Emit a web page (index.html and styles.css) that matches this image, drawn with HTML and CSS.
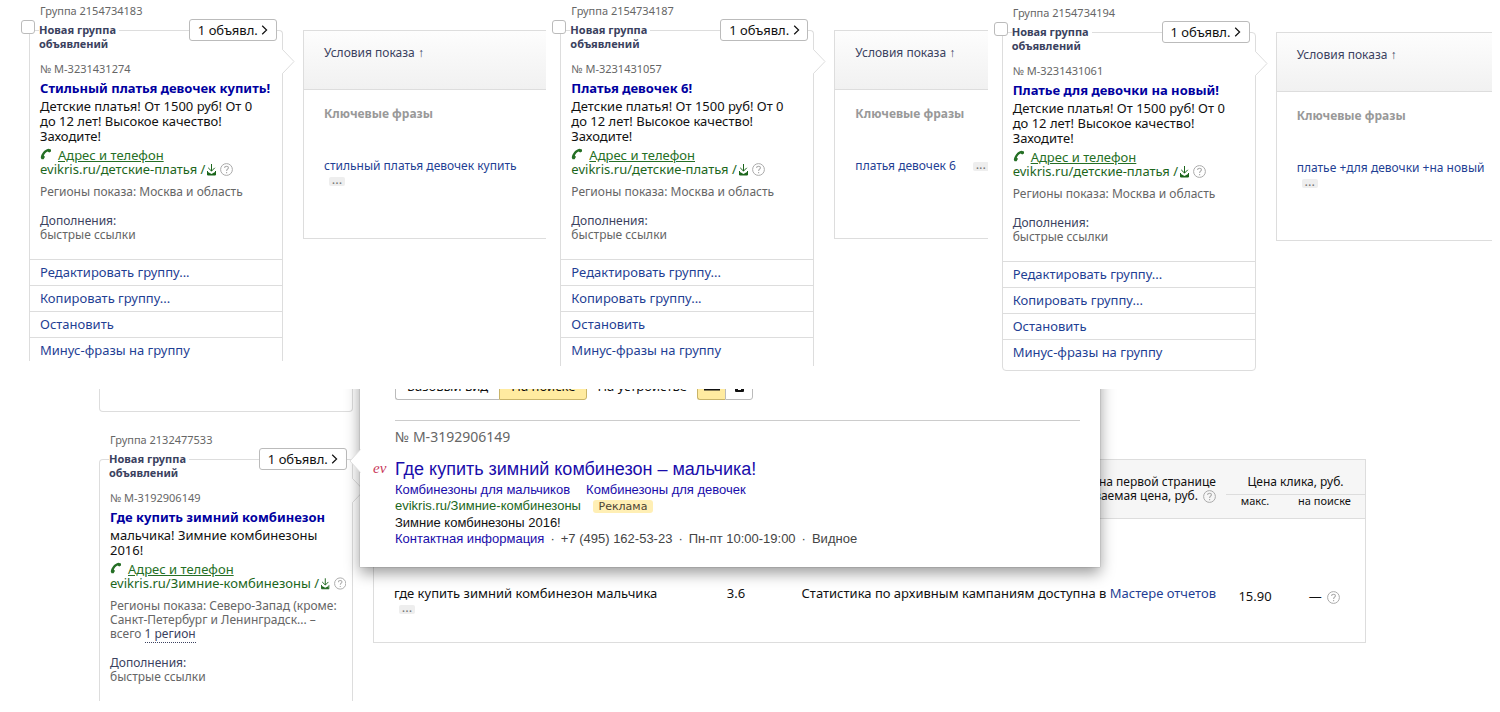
FILE: index.html
```
<!DOCTYPE html>
<html lang="ru">
<head>
<meta charset="utf-8">
<title>Группы объявлений</title>
<link rel="stylesheet" href="styles.css">
</head>
<body>
<svg class="sprite" width="0" height="0" aria-hidden="true">
  <symbol id="phone" viewBox="0 0 12 12"><path d="M0.8 9.8C1 6 4.6 1.400 8.400 0.800L11 1.400V3.500L9.200 4.600L7.600 3.400C5.800 4.200 4.400 6 3.800 7.800L5 8.800L3.600 11.200L1.600 11.200Z"/></symbol>
  <symbol id="download" viewBox="0 0 9 12"><path d="M4.5 0V7M1.200 3.800L4.500 7.100L7.800 3.800" fill="none" stroke="currentColor"/><path d="M0.500 7V11H8.500V7" fill="none" stroke="currentColor"/><path d="M1 8L4.500 10L8 8V11H1Z"/></symbol>
  <symbol id="help" viewBox="0 0 13 13"><circle cx="6.5" cy="6.5" r="5.9" fill="none" stroke="currentColor"/><path d="M4.6 5.1C4.6 2.6 8.5 2.7 8.4 4.9C8.3 6.2 6.6 6.3 6.6 7.9M6.6 9V10.2" fill="none" stroke="currentColor" stroke-width="1.1"/></symbol>
  <symbol id="chevron" viewBox="0 0 7 10"><path d="M1.2 0.7L5.6 5L1.2 9.3" fill="none" stroke="currentColor" stroke-width="1.2"/></symbol>
  <symbol id="pointer" viewBox="0 0 13 25"><path d="M0 0L12 12.5L0 25Z" fill="#fff"/><path d="M0.5 0V0.5L12 12.5L0.5 24.5V25" fill="none" stroke="#ddd"/></symbol>
</svg>

<main>
  <div class="groups">
    <section class="group">
      <div class="side">
        <p class="group-id">Группа 2154734183</p>
        <div class="card">
          <input class="check" type="checkbox" aria-label="Выбрать группу 2154734183">
          <svg class="pointer"><use href="#pointer"/></svg>
          <div class="head"><h2>Новая группа объявлений</h2><button type="button" class="count">1 объявл. <svg class="chevron"><use href="#chevron"/></svg></button></div>
          <div class="ad">
            <p class="num">№ М-3231431274</p>
            <h3>Стильный платья девочек купить!</h3>
            <p class="desc">Детские платья! От 1500 руб! От 0 до 12 лет! Высокое качество! Заходите!</p>
            <p class="contact"><svg class="phone"><use href="#phone"/></svg><a href="#">Адрес и телефон</a></p>
            <p class="url">evikris.ru/детские-платья /<svg class="download"><use href="#download"/></svg><svg class="help"><use href="#help"/></svg></p>
            <p class="regions">Регионы показа: Москва и область</p>
            <p class="extra"><b>Дополнения:</b><br>быстрые ссылки</p>
          </div>
          <nav class="actions"><a href="#">Редактировать группу...</a><a href="#">Копировать группу...</a><a href="#">Остановить</a><a href="#">Минус-фразы на группу</a></nav>
        </div>
      </div>
      <table class="terms">
        <thead><tr><th>Условия показа <span class="sort">↑</span></th></tr></thead>
        <tbody><tr><td><h4>Ключевые фразы</h4><a href="#">стильный платья девочек купить</a><br><button type="button" class="more" aria-label="Ещё">...</button></td></tr></tbody>
      </table>
    </section>

    <section class="group">
      <div class="side">
        <p class="group-id">Группа 2154734187</p>
        <div class="card mid">
          <input class="check" type="checkbox" aria-label="Выбрать группу 2154734187">
          <svg class="pointer"><use href="#pointer"/></svg>
          <div class="head"><h2>Новая группа объявлений</h2><button type="button" class="count">1 объявл. <svg class="chevron"><use href="#chevron"/></svg></button></div>
          <div class="ad">
            <p class="num">№ М-3231431057</p>
            <h3>Платья девочек 6!</h3>
            <p class="desc">Детские платья! От 1500 руб! От 0 до 12 лет! Высокое качество! Заходите!</p>
            <p class="contact"><svg class="phone"><use href="#phone"/></svg><a href="#">Адрес и телефон</a></p>
            <p class="url">evikris.ru/детские-платья /<svg class="download"><use href="#download"/></svg><svg class="help"><use href="#help"/></svg></p>
            <p class="regions">Регионы показа: Москва и область</p>
            <p class="extra"><b>Дополнения:</b><br>быстрые ссылки</p>
          </div>
          <nav class="actions"><a href="#">Редактировать группу...</a><a href="#">Копировать группу...</a><a href="#">Остановить</a><a href="#">Минус-фразы на группу</a></nav>
        </div>
      </div>
      <table class="terms">
        <thead><tr><th>Условия показа <span class="sort">↑</span></th></tr></thead>
        <tbody><tr><td class="tight"><h4>Ключевые фразы</h4><a href="#">платья девочек 6</a><button type="button" class="more" aria-label="Ещё">...</button></td></tr></tbody>
      </table>
    </section>

    <section class="group lower">
      <div class="side">
        <p class="group-id">Группа 2154734194</p>
        <div class="card whole">
          <input class="check" type="checkbox" aria-label="Выбрать группу 2154734194">
          <svg class="pointer"><use href="#pointer"/></svg>
          <div class="head"><h2>Новая группа объявлений</h2><button type="button" class="count">1 объявл. <svg class="chevron"><use href="#chevron"/></svg></button></div>
          <div class="ad">
            <p class="num">№ М-3231431061</p>
            <h3>Платье для девочки на новый!</h3>
            <p class="desc">Детские платья! От 1500 руб! От 0 до 12 лет! Высокое качество! Заходите!</p>
            <p class="contact"><svg class="phone"><use href="#phone"/></svg><a href="#">Адрес и телефон</a></p>
            <p class="url">evikris.ru/детские-платья /<svg class="download"><use href="#download"/></svg><svg class="help"><use href="#help"/></svg></p>
            <p class="regions">Регионы показа: Москва и область</p>
            <p class="extra"><b>Дополнения:</b><br>быстрые ссылки</p>
          </div>
          <nav class="actions"><a href="#">Редактировать группу...</a><a href="#">Копировать группу...</a><a href="#">Остановить</a><a href="#">Минус-фразы на группу</a></nav>
        </div>
      </div>
      <table class="terms">
        <thead><tr><th>Условия показа <span class="sort">↑</span></th></tr></thead>
        <tbody><tr><td><h4>Ключевые фразы</h4><a href="#">платье +для девочки +на новый</a><br><button type="button" class="more" aria-label="Ещё">...</button></td></tr></tbody>
      </table>
    </section>
  </div>

  <div class="detail">
    <div class="previous"></div>
    <section class="group">
      <div class="side">
        <p class="group-id">Группа 2132477533</p>
        <div class="card">
          <svg class="pointer"><use href="#pointer"/></svg>
          <div class="head"><h2>Новая группа объявлений</h2><button type="button" class="count">1 объявл. <svg class="chevron"><use href="#chevron"/></svg></button></div>
          <div class="ad">
            <p class="num">№ М-3192906149</p>
            <h3>Где купить зимний комбинезон</h3>
            <p class="desc">мальчика! Зимние комбинезоны 2016!</p>
            <p class="contact"><svg class="phone"><use href="#phone"/></svg><a href="#">Адрес и телефон</a></p>
            <p class="url">evikris.ru/Зимние-комбинезоны /<svg class="download"><use href="#download"/></svg><svg class="help"><use href="#help"/></svg></p>
            <p class="regions">Регионы показа: Северо-Запад (кроме: Санкт-Петербург и Ленинградск... – всего <a href="#">1 регион</a></p>
            <p class="extra"><b>Дополнения:</b><br>быстрые ссылки</p>
          </div>
        </div>
      </div>
      <table class="stats">
        <colgroup><col class="c-phrase"><col class="c-ctr"><col><col class="c-max"><col class="c-search"></colgroup>
        <thead>
          <tr><th rowspan="2"></th><th rowspan="2"></th><th rowspan="2" class="right">Ставка на первой странице<br>Списываемая цена, руб. <svg class="help"><use href="#help"/></svg></th><th colspan="2" class="price">Цена клика, руб.</th></tr>
          <tr><th class="sub">макс.</th><th class="sub">на поиске</th></tr>
        </thead>
        <tbody>
          <tr><td class="phrase">где купить зимний комбинезон мальчика<br><button type="button" class="more" aria-label="Ещё">...</button></td><td>3.6</td><td class="right">Статистика по архивным кампаниям доступна в <a href="#">Мастере отчетов</a></td><td class="money">15.90</td><td class="money">— <svg class="help"><use href="#help"/></svg></td></tr>
        </tbody>
      </table>
    </section>

    <aside class="preview">
      <svg class="notch" viewBox="0 0 12 24"><path d="M12 0L1 12L12 24Z" fill="#fff"/><path d="M11.5 0.5L1 12L11.5 23.5" fill="none" stroke="#ddd"/></svg>
      <div class="tabs">
        <div class="switch"><button type="button">Базовый вид</button><button type="button" class="on">На поиске</button></div>
        <span>На устройстве</span>
        <div class="switch devices">
          <button type="button" class="on" aria-label="Компьютер"><svg width="16" height="12" viewBox="0 0 16 12"><path d="M2 0H14V8H2ZM0 9H16V11.500H0Z"/></svg></button>
          <button type="button" aria-label="Телефон"><svg width="9" height="14" viewBox="0 0 9 14"><path d="M1 0H8Q9 0 9 1V13Q9 14 8 14H1Q0 14 0 13V1Q0 0 1 0Z"/><path d="M3 11.500H6" stroke="#fff"/></svg></button>
        </div>
      </div>
      <p class="preview-num">№ М-3192906149</p>
      <div class="snippet">
        <span class="favicon">ev</span>
        <h3><a href="#">Где купить зимний комбинезон – мальчика!</a></h3>
        <p class="sitelinks"><a href="#">Комбинезоны для мальчиков</a><a href="#">Комбинезоны для девочек</a></p>
        <p class="address">evikris.ru/Зимние-комбинезоны <span class="badge">Реклама</span></p>
        <p class="body">Зимние комбинезоны 2016!</p>
        <p class="info"><a href="#">Контактная информация</a><i>·</i>+7 (495) 162-53-23<i>·</i>Пн-пт 10:00-19:00<i>·</i>Видное</p>
      </div>
    </aside>
  </div>
</main>
</body>
</html>
```
FILE: styles.css
```
* { box-sizing: border-box; }

body {
  margin: 0;
  background: #fff;
  color: #111;
  font: 13px/15px "Noto Sans", sans-serif;
}

h2, h3, h4, p { margin: 0; }
a { color: #1f3f94; text-decoration: none; }
svg { fill: currentColor; }
.sprite { position: absolute; }

button {
  font: inherit;
  color: inherit;
  background: #fff;
  border: 0;
  padding: 0;
  cursor: pointer;
}

.groups {
  display: grid;
  grid-template-columns: minmax(0, 517fr) minmax(0, 427fr) minmax(0, 490fr);
  gap: 14px;
  align-items: start;
  padding: 3px 8px 0 29px;
  height: 389px;
}

.group { display: flex; align-items: flex-start; gap: 20px; }
.lower { padding-top: 2px; }
.side { flex: none; width: 254px; }

.group-id {
  padding-left: 11px;
  font-size: 11px;
  line-height: 16px;
  color: #666;
}

.card {
  position: relative;
  margin-top: 11px;
  border: 1px solid #ddd;
  border-bottom: 0;
  border-radius: 4px 4px 0 0;
}

.mid { padding-bottom: 5px; }
.whole { padding-bottom: 7px; border-bottom: 1px solid #ddd; border-radius: 4px; }

.check {
  position: absolute;
  left: -9px;
  top: -11px;
  width: 14px;
  height: 14px;
  margin: 0;
  appearance: none;
  background: #fff;
  border: 1px solid #bbb;
  border-radius: 3px;
}

.pointer {
  position: absolute;
  right: -13px;
  top: 18px;
  width: 13px;
  height: 25px;
}

.head {
  display: flex;
  justify-content: space-between;
  align-items: flex-start;
  margin-top: -12px;
  padding: 0 5px 0 9px;
}

.head h2 {
  width: min-content;
  min-width: 80px;
  margin-top: 4px;
  background: #fff;
  font-size: 11px;
  line-height: 14px;
  color: #3b4260;
}

.count {
  width: 88px;
  height: 22px;
  border: 1px solid #bbb;
  border-radius: 3px;
}

.chevron { width: 7px; height: 10px; }

.ad { padding: 9px 6px 17px 10px; }
.num { font-size: 11px; line-height: 18px; color: #666; }

.ad h3 {
  font-size: 13px;
  line-height: 21px;
  color: #0000a0;
  white-space: nowrap;
}

.desc { padding-right: 20px; }
.contact { display: flex; gap: 6px; margin-top: 4px; line-height: 14px; }
.contact a { color: #256f25; text-decoration: underline; }
.phone { width: 12px; height: 12px; color: #256f25; }
.url { display: flex; align-items: center; color: #1c661c; white-space: nowrap; }
.download { width: 9px; height: 12px; margin-left: 2px; }
.help { width: 13px; height: 13px; margin-left: 4px; color: #aaa; }

.regions, .extra { font-size: 12px; line-height: 14px; color: #666; }
.regions { margin-top: 8px; }
.regions a { color: #3b4260; border-bottom: 1px dotted #3b4260; }
.extra { margin-top: 15px; }
.extra b { font-weight: normal; color: #3b4260; }

.actions a {
  display: block;
  height: 26px;
  padding-left: 10px;
  border-top: 1px solid #ddd;
  line-height: 25px;
}

.actions a:last-child { height: 24px; }

.terms {
  flex: 1;
  min-width: 0;
  height: 209px;
  margin-top: 27px;
  border-collapse: separate;
  border-spacing: 0;
  border: 1px solid #ddd;
  border-right: 0;
}

.terms th {
  height: 59px;
  padding: 14px 20px 0;
  border-bottom: 1px solid #ddd;
  background: linear-gradient(#fdfdfd, #f1f1f1);
  font-size: 12px;
  font-weight: normal;
  text-align: left;
  vertical-align: top;
  color: #3b4260;
}

.sort { font-size: 12px; }

.terms td {
  max-width: 0;
  padding: 16px 0 0 20px;
  vertical-align: top;
  white-space: nowrap;
}

.terms td.tight { overflow: hidden; }
.terms h4 { margin-bottom: 37px; font-size: 12px; color: #999; }
.terms td a { font-size: 12px; }

.more {
  width: 16px;
  height: 9px;
  margin: 4px 0 0 5px;
  padding-bottom: 5px;
  background: #eee;
  border-radius: 2px;
  line-height: 3px;
  vertical-align: top;
  color: #777;
}

.tight .more { margin-left: 17px; }

.detail {
  position: relative;
  height: 312px;
  padding-left: 99px;
  overflow: hidden;
}

.previous {
  width: 254px;
  height: 23px;
  border: 1px solid #ddd;
  border-top: 0;
  border-radius: 0 0 4px 4px;
}

.detail .group { margin-top: 20px; padding-right: 134px; }
.detail .card { height: 260px; }

.stats {
  flex: 1;
  min-width: 0;
  height: 184px;
  margin-top: 27px;
  table-layout: fixed;
  border-collapse: separate;
  border-spacing: 0;
  border: 1px solid #ddd;
}

.c-phrase { width: 326px; }
.c-ctr { width: 72px; }
.c-max { width: 58px; }
.c-search { width: 81px; }

.stats th {
  padding: 0;
  background: #f6f6f6;
  border-bottom: 1px solid #ddd;
  font-size: 12px;
  line-height: 14px;
  font-weight: normal;
}

.stats .price { height: 35px; padding-top: 10px; }
.stats .sub { height: 24px; font-size: 11px; line-height: 12px; vertical-align: top; }
.stats td { height: 123px; padding: 67px 0 0; text-align: center; vertical-align: top; }
.stats .right { padding-right: 10px; text-align: right; white-space: nowrap; }
.stats .phrase { padding-left: 20px; text-align: left; white-space: nowrap; }
.stats .money { padding-top: 70px; }
.stats .help { margin-left: 2px; vertical-align: middle; }

.preview {
  position: absolute;
  left: 360px;
  top: -40px;
  width: 740px;
  padding: 23px 20px 20px 35px;
  background: #fff;
  box-shadow: 0 6px 14px rgba(0, 0, 0, .4), 0 0 1px rgba(0, 0, 0, .4);
}

.notch {
  position: absolute;
  left: -11px;
  top: 100px;
  width: 12px;
  height: 24px;
}

.tabs {
  display: flex;
  align-items: center;
  gap: 10px;
  padding-bottom: 20px;
  border-bottom: 1px solid #ccc;
}

.switch { display: flex; }
.switch button { height: 28px; padding: 0 11px; border: 1px solid #bbb; }
.switch button:first-child { border-radius: 3px 0 0 3px; border-right: 0; }
.switch button:last-child { border-radius: 0 3px 3px 0; }
.switch .on { background: #ffeba0; border-color: #c9b469; }
.devices button { width: 28px; padding: 0; }

.preview-num { margin-top: 7px; font-size: 14px; line-height: 18px; color: #666; }

.snippet {
  position: relative;
  margin-top: 10px;
  font: 13px/16px "Liberation Sans", Arial, sans-serif;
}

.snippet a { color: #1a0dab; }
.snippet h3 { font-size: 18px; font-weight: normal; line-height: 26px; }

.favicon {
  position: absolute;
  left: -22px;
  top: 4px;
  color: #c8375a;
  font: italic 15px/16px "Liberation Serif", serif;
}

.sitelinks { display: flex; gap: 16px; }
.address { color: #1c661c; }

.badge {
  margin-left: 8px;
  padding: 0 6px;
  background: #ffefb5;
  border-radius: 3px;
  color: #4d4433;
  font: 11px/15px "DejaVu Sans", sans-serif;
}

.body { margin-top: 1px; }
.info { color: #444; }
.info i { padding: 0 6px; font-style: normal; }
```
